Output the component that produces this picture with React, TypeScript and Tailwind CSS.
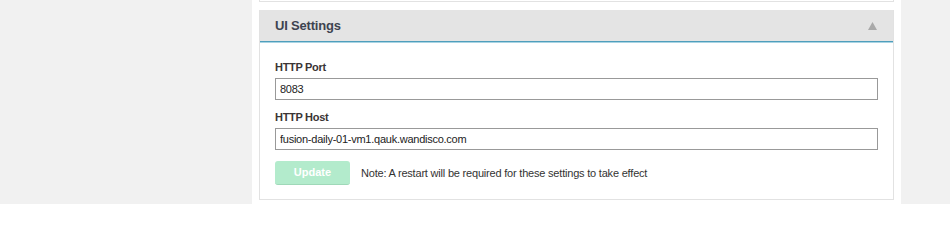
export default function App() {
  return (
    <div
      className="flex h-[204px] w-full bg-[#f1f1f1] text-[#333]"
      style={{ fontFamily: '"Liberation Sans", Arial, sans-serif' }}
    >
      <div className="w-[252px] shrink-0" />
      <div className="w-[649px] shrink-0 bg-white px-[7px]">
        {/* tail of the panel above */}
        <div className="h-[2px] border-x border-b border-[#e2e2e2]" />

        <div className="mt-[8px] border border-t-0 border-[#e2e2e2]">
          <div className="flex h-[31px] items-center justify-between bg-[#e4e4e4] pl-[15px] pr-[16px]">
            <span className="text-[13px] font-bold tracking-[-0.2px] text-[#3d4350]">
              UI Settings
            </span>
            <svg width="9" height="8" viewBox="0 0 9 8" className="mt-[1px]">
              <polygon points="4.5,0 9,8 0,8" fill="#a9a9a9" />
            </svg>
          </div>
          <div className="h-[1px] bg-[#4f9ebc]" />
          <div className="h-[1px] bg-[#a9d4e3]" />

          <div className="px-[15px] pb-[14px] pt-[16px]">
            <label className="block text-[11px] font-bold leading-[16px] tracking-[-0.3px] text-[#3a3434]">
              HTTP Port
            </label>
            <input
              className="mt-[3px] block h-[22px] w-full border border-[#999] px-[4px] text-[11px] tracking-[-0.25px] text-[#222] outline-none"
              defaultValue="8083"
            />

            <label className="mt-[9px] block text-[11px] font-bold leading-[16px] tracking-[-0.3px] text-[#3a3434]">
              HTTP Host
            </label>
            <input
              className="mt-[3px] block h-[22px] w-full border border-[#999] px-[4px] text-[11px] tracking-[-0.25px] text-[#222] outline-none"
              defaultValue="fusion-daily-01-vm1.qauk.wandisco.com"
            />

            <div className="mt-[11px] flex items-center gap-[11px]">
              <button className="h-[24px] w-[75px] rounded-[3px] border-b border-[#9fd8b8] bg-[#b3ebcc] text-[11px] font-bold text-white">
                Update
              </button>
              <span className="text-[11px] tracking-[-0.2px] text-[#333]">
                Note: A restart will be required for these settings to take
                effect
              </span>
            </div>
          </div>
        </div>
      </div>
      <div className="flex-1" />
    </div>
  );
}
